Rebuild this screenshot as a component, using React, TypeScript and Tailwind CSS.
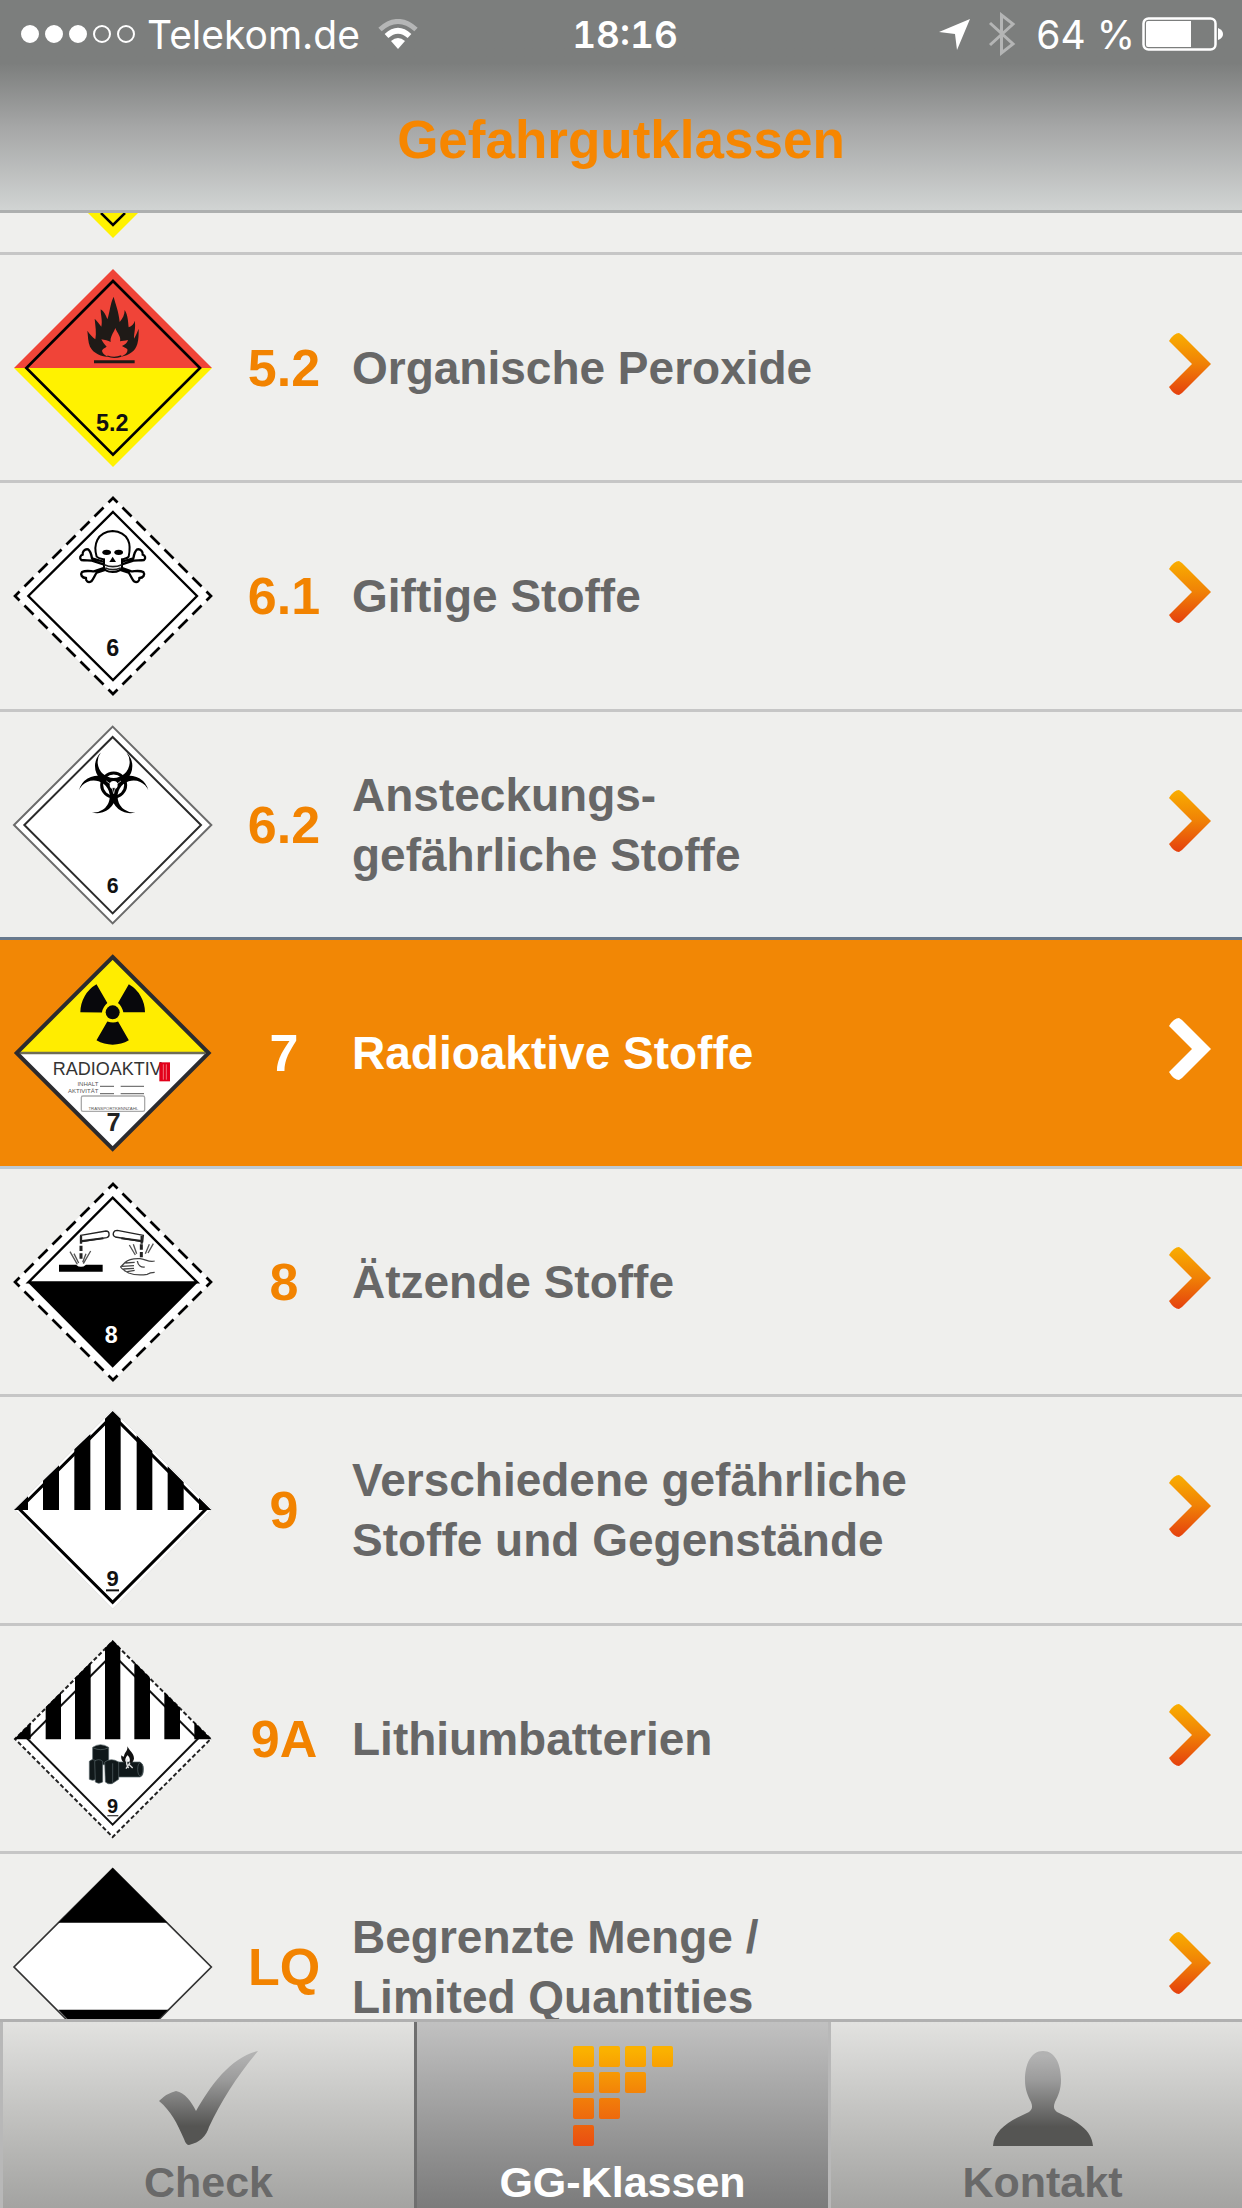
import React, { ReactNode } from 'react';
import clsx from 'clsx';

const DASHED = { strokeWidth: 8, pathLength: 28, strokeDasharray: '0.65 0.35', strokeDashoffset: 0.325 };

// every sign is a 594 unit wide diamond
const Sign = ({ top, children }: { top: number; children: ReactNode }) => (
    <svg viewBox={`42 ${top} 594 594`} className="w-[198px] h-[198px] shrink-0 overflow-visible" aria-hidden="true">
        {children}
    </svg>
);

const SignText = ({ x, y, size = 70, fill = '#111', children }: { x: number; y: number; size?: number; fill?: string; children: ReactNode }) => (
    <text x={x} y={y} fontSize={size} fill={fill} textAnchor="middle" fontWeight="bold">
        {children}
    </text>
);

const PeroxideSign = () => (
    <Sign top={205}>
        <path d="M42 502 339 205 636 502Z" fill="#f04438" />
        <path d="M42 502 339 799 636 502Z" fill="#fff200" />
        <path d="M339 241 600 502 339 762 79 502Z" fill="none" stroke="#000" strokeWidth="8" />
        <path
            fill="#1f1a17"
            d="M262 390C270 402 278 410 286 416C290 396 286 376 284 354C292 362 298 370 304 378C308 360 302 344 302 326C312 332 318 344 322 356C330 334 330 310 341 288C346 310 356 330 359 364C368 354 374 342 374 328C384 344 384 362 386 380C396 376 402 370 404 360C408 380 402 396 402 414C408 404 412 394 416 384C416 402 416 416 412 430C406 452 386 464 364 468C376 462 384 456 382 446C378 440 370 440 366 436C376 432 382 426 384 418C374 420 366 420 360 422C364 408 352 398 346 382C340 398 330 408 332 424C324 420 314 418 304 416C308 424 314 432 320 438C314 442 308 444 306 450C308 460 318 466 328 469C304 468 280 458 270 438C264 424 264 406 262 390Z"
        />
        <path d="M322 466Q342 474 364 466" fill="none" stroke="#1f1a17" strokeWidth="4" />
        <path d="M282 483H404" stroke="#1f1a17" strokeWidth="9" />
        <SignText x={337} y={690}>5.2</SignText>
    </Sign>
);

const Bone = ({ d }: { d: string }) => <path d={d} fill="#fff" stroke="#000" strokeWidth="7" strokeLinejoin="round" />;

const ToxicSign = () => (
    <Sign top={51}>
        <path d="M339 51 636 348 339 645 42 348Z" fill="#fff" />
        <path d="M339 54 633 348 339 642 45 348Z" fill="none" stroke="#000" {...DASHED} />
        <path d="M339 96 591 348 339 600 85 348Z" fill="none" stroke="#000" strokeWidth="7" />
        <Bone d="M314 246 276 235C274 224 270 212 264 208C254 206 246 216 248 224C240 226 238 236 244 240C256 242 268 240 276 242L386 278C392 286 396 298 402 304C412 310 420 302 418 294C430 294 436 284 430 276C418 270 404 274 394 274L350 258Z" />
        <Bone d="M362 246 400 235C402 224 406 212 412 208C422 206 430 216 428 224C436 226 438 236 432 240C420 242 408 240 400 242L290 278C284 286 280 298 274 304C264 310 256 302 258 294C246 294 240 284 246 276C258 270 272 274 282 274L328 258Z" />
        <path
            d="M290 230C284 210 286 192 292 180C300 164 318 154 338 153C358 154 376 164 384 180C390 192 390 210 386 230C382 236 374 236 366 238L366 262Q362 275 338 276Q314 275 312 262L312 238C304 236 296 236 290 230Z"
            fill="#fff"
            stroke="#000"
            strokeWidth="6"
        />
        <ellipse cx="320" cy="217" rx="13" ry="8" />
        <ellipse cx="356" cy="217" rx="13" ry="8" />
        <path d="M338 230 348 246H328Z" />
        <path d="M313 254Q338 266 366 254M316 264Q338 274 362 264" fill="none" stroke="#222" strokeWidth="5" />
        <SignText x={338} y={527}>6</SignText>
    </Sign>
);

const CRESCENT = 'M-38.5-97.7A56 56 0 1 0 38.5-97.7A48 48 0 1 1-38.5-97.7Z';

const InfectiousSign = () => (
    <Sign top={45}>
        <path d="M338 47 634 342 338 637 42 342Z" fill="#fff" stroke="#6b6b6b" strokeWidth="6" />
        <path d="M338 78 603 342 338 607 73 342Z" fill="none" stroke="#2a2a2a" strokeWidth="6" />
        <g transform="translate(341 222)">
            <path d={CRESCENT} />
            <path d={CRESCENT} transform="rotate(120)" />
            <path d={CRESCENT} transform="rotate(240)" />
            <circle r="36" fill="none" stroke="#000" strokeWidth="9" />
            <circle r="12" fill="#fff" />
            <path d="M-5 8 0 26 5 8ZM-8-2-22-12M8-2 22-12" stroke="#fff" strokeWidth="2" />
        </g>
        <SignText x={338} y={545} size={64}>6</SignText>
    </Sign>
);

const BLADE = 'M32 0H97A97 97 0 0 0 48.5-84L16-28Q28-18 32 0Z';

const RadioactiveSign = () => (
    <Sign top={71}>
        <path d="M338 78 628 368 338 658 48 368Z" fill="#fff" />
        <path d="M338 78 628 368H48Z" fill="#ffed00" />
        <path d="M60 368H616" stroke="#6f6d55" strokeWidth="7" />
        <path d="M338 80 626 368 338 656 50 368Z" fill="none" stroke="#2b2b2f" strokeWidth="12" />
        <g transform="translate(338 246)" fill="#08080c">
            <path d={BLADE} />
            <path d={BLADE} transform="rotate(120)" />
            <path d={BLADE} transform="rotate(240)" />
            <circle r="21" />
        </g>
        <g fontWeight="normal" fill="#555">
            <text x="158" y="435" fontSize="54" fill="#333">RADIOAKTIV</text>
            <text x="295" y="466" fontSize="18" textAnchor="end">INHALT</text>
            <text x="295" y="488" fontSize="18" textAnchor="end">AKTIVITÄT</text>
            <text x="340" y="539" fontSize="13" textAnchor="middle">TRANSPORTKENNZAHL</text>
        </g>
        <path d="M478 396H510V453H478Z" fill="#e2001a" />
        <path d="M490 402V448M499 402V448" stroke="#f2707c" strokeWidth="3" />
        <path d="M300 468H342M362 468H432M300 490H342M362 490H432" stroke="#777" strokeWidth="4" />
        <rect x="244" y="497" width="190" height="46" rx="5" fill="none" stroke="#aaa" strokeWidth="4" />
        <SignText x={341} y={603} size={76} fill="#222">7</SignText>
    </Sign>
);

const CorrosiveSign = () => (
    <Sign top={66}>
        <path d="M339 66 636 363 339 660 42 363Z" fill="#fff" />
        <path d="M339 69 633 363 339 657 45 363Z" fill="none" stroke="#000" {...DASHED} />
        <path d="M83 364H594L338 620Z" />
        <path d="M338 110 592 364H85Z" fill="none" stroke="#000" strokeWidth="7" />
        <g fill="none" stroke="#222" strokeWidth="4">
            <path d="M242 223 318 210C330 210 330 228 320 230L244 242ZM430 223 352 208C338 208 336 224 346 228L428 242Z" />
            <path d="M246 240 310 232M426 240 364 232" strokeWidth="6" />
            <path d="M243 225V248M425 225V248" strokeWidth="7" />
            <path d="M243 254V296M424 250V290" strokeWidth="9" strokeDasharray="16 7" />
            <path d="M210 272 232 310M222 278 236 306M272 270 250 308M258 278 248 304M388 252 406 282M400 250 410 278M448 250 436 278M460 248 444 276" stroke="#555" />
            <path d="M464 300C448 306 436 294 420 293C400 292 384 296 376 304L362 318C366 326 376 330 386 336C402 342 428 342 442 340C450 334 456 334 464 334M376 306 404 304M366 316 402 314M370 324 402 322M382 332 404 328M412 300C414 314 424 320 434 318" stroke="#444" />
        </g>
        <path d="M177 311H228Q243 324 258 311H308V332H177Z" />
        <SignText x={334} y={546} fill="#fff">8</SignText>
    </Sign>
);

const MiscSign = () => (
    <Sign top={60}>
        <path d="M338 56 636 354 338 654 42 354Z" fill="#fff" stroke="#ddd" strokeWidth="2" />
        <path d="M338 74 618 354 338 634 58 354Z" fill="none" stroke="#000" strokeWidth="9" />
        <path d="M315 83 338 60 362 83V357H315ZM223 175 271 129V357H223ZM129 269 177 223V357H129ZM410 133 457 180V357H410ZM503 226 551 274V357H503ZM42 357 84 316V357ZM597 320 634 357H597Z" />
        <SignText x={338} y={586} size={66}>9</SignText>
        <path d="M318 598H357" stroke="#111" strokeWidth="6" />
    </Sign>
);

const BatterySign = () => (
    <Sign top={56}>
        <path d="M338 56 636 353 338 651 42 353Z" fill="#fff" />
        <path d="M338 60 632 353 338 647 45 353Z" fill="none" stroke="#222" strokeWidth="6" strokeDasharray="13 7" />
        <path d="M338 98 593 353 338 610 83 353Z" fill="none" stroke="#111" strokeWidth="6" />
        <path d="M315 80 338 57 361 80V354H315ZM225 170 272 123V354H225ZM137 258 183 212V354H137ZM403 122 450 169V354H403ZM493 212 540 259V354H493ZM42 354 92 304V354ZM583 302 635 354H583Z" />
        <g fill="#10181a" stroke="#59666a" strokeWidth="2">
            <path d="M278 378Q301 362 326 378V430H278Z" />
            <path d="M268 420Q276 410 288 418V474Q278 480 268 474ZM350 422H420Q432 430 430 446Q430 464 420 467H350Z" />
            <path d="M284 420Q296 410 308 420V482Q296 490 286 482Z" />
            <path d="M314 422Q334 408 356 422V474L336 487Q324 490 316 482Z" />
            <path d="M338 426V484M280 380Q302 390 324 380" fill="none" />
            <ellipse cx="421" cy="444" rx="8" ry="20" />
        </g>
        <path d="M382 375C388 388 402 396 402 412C400 422 394 426 388 424C392 414 388 406 382 402C376 410 374 416 378 424C366 424 362 412 364 402C368 406 370 406 372 406C372 394 384 390 382 375Z" fill="#111" />
        <path d="M382 412Q376 426 386 440M390 424 378 442M388 430 398 440" fill="none" stroke="#ddd" strokeWidth="4" />
        <SignText x={338} y={575} size={60}>9</SignText>
        <path d="M322 583H355" stroke="#444" strokeWidth="4" />
    </Sign>
);

const LimitedSign = () => (
    <Sign top={82}>
        <path d="M338 84 634 379 338 675 42 379Z" fill="#fff" stroke="#333" strokeWidth="5" />
        <path d="M338 82 502 246H175ZM175 507H504L338 675Z" />
    </Sign>
);

const Chevron = ({ active }: { active?: boolean }) => (
    <svg viewBox="0 0 42 62" className="w-[42px] h-[62px] mb-2 mr-[31px] shrink-0" aria-hidden="true">
        <path d="M0 8Q5 0 10 0L13 2 42 31 13 60 10 62Q5 62 0 54L23 31Z" fill={active ? '#fff' : 'url(#chevron)'} />
    </svg>
);

const ROWS = [
    { code: '5.2', lines: ['Organische Peroxide'], sign: <PeroxideSign /> },
    { code: '6.1', lines: ['Giftige Stoffe'], sign: <ToxicSign /> },
    { code: '6.2', lines: ['Ansteckungs-', 'gefährliche Stoffe'], sign: <InfectiousSign />, line: 'border-[#68798d]' },
    { code: '7', lines: ['Radioaktive Stoffe'], sign: <RadioactiveSign />, line: 'border-[#bdcad5]', active: true },
    { code: '8', lines: ['Ätzende Stoffe'], sign: <CorrosiveSign /> },
    { code: '9', lines: ['Verschiedene gefährliche', 'Stoffe und Gegenstände'], sign: <MiscSign /> },
    { code: '9A', lines: ['Lithiumbatterien'], sign: <BatterySign /> },
    { code: 'LQ', lines: ['Begrenzte Menge /', 'Limited Quantities'], sign: <LimitedSign /> },
];

const StatusBar = () => (
    <div className="grid grid-cols-[1fr_auto_1fr] items-center h-[68px] text-white text-[39px] leading-none font-['Inter',sans-serif]">
        <div className="flex items-center pl-[21px]">
            <div className="flex gap-[6px] mr-3">
                {[1, 1, 1, 0, 0].map((on, i) => (
                    <span key={i} className={clsx('size-[18px] rounded-full border-2 border-white', on && 'bg-white')} />
                ))}
            </div>
            <span>Telekom.de</span>
            <svg viewBox="0 0 40 30" className="w-10 h-[30px] ml-[18px]" fill="none" aria-hidden="true">
                <path d="M2 10.500Q20-5.500 38 10.500" stroke="#b5b6b6" strokeWidth="5" />
                <path d="M8.500 17Q20 6.500 31.500 17" stroke="#fff" strokeWidth="5.500" />
                <path d="M13 22Q20 16 27 22L20 30Z" fill="#fff" />
            </svg>
        </div>
        <span className="pl-2 text-[37px] font-semibold tabular-nums">18:16</span>
        <div className="flex items-center justify-end pr-[18px]">
            <svg viewBox="0 0 31 31" className="size-[31px] mr-[18px]" aria-hidden="true">
                <path d="M31 0 18 31 16 15 0 13Z" fill="#fff" />
            </svg>
            <svg viewBox="0 0 28 44" className="w-7 h-11 mr-5" fill="none" stroke="#b4b5b5" strokeWidth="3" aria-hidden="true">
                <path d="M2 11 25 32 13.500 41V3L25 12 2 33" />
            </svg>
            <span>64 %</span>
            <svg viewBox="0 0 82 34" className="w-[82px] h-[34px] ml-[7px]" aria-hidden="true">
                <rect x="1.500" y="1.500" width="72" height="31" rx="5" fill="none" stroke="#fff" strokeWidth="2.500" />
                <path d="M6 4H49V30H6Q4 30 4 28V6Q4 4 6 4Z" fill="#fff" />
                <path d="M76 11Q81 13 81 17T76 23Z" fill="#fff" />
            </svg>
        </div>
    </div>
);

const CheckIcon = () => (
    <svg viewBox="0 0 100 94" className="w-[100px] h-[100px] pt-1" aria-hidden="true">
        <path d="M0 50Q8 42 17 40C26 42 32 50 37 60C52 34 72 6 99 0C78 25 62 50 50 76Q46 90 30 94Q27 94 25 88C18 72 12 60 0 50Z" fill="url(#grey)" />
    </svg>
);

const ClassesIcon = () => (
    <svg viewBox="0 0 100 100" className="size-[100px]" fill="url(#squares)" aria-hidden="true">
        <path d="M2 0H19Q21 0 21 2V19Q21 21 19 21H2Q0 21 0 19V2Q0 0 2 0ZM28 0H45Q47 0 47 2V19Q47 21 45 21H28Q26 21 26 19V2Q26 0 28 0ZM54 0H71Q73 0 73 2V19Q73 21 71 21H54Q52 21 52 19V2Q52 0 54 0ZM81 0H98Q100 0 100 2V19Q100 21 98 21H81Q79 21 79 19V2Q79 0 81 0ZM2 26H19Q21 26 21 28V45Q21 47 19 47H2Q0 47 0 45V28Q0 26 2 26ZM28 26H45Q47 26 47 28V45Q47 47 45 47H28Q26 47 26 45V28Q26 26 28 26ZM54 26H71Q73 26 73 28V45Q73 47 71 47H54Q52 47 52 45V28Q52 26 54 26ZM2 52H19Q21 52 21 54V71Q21 73 19 73H2Q0 73 0 71V54Q0 52 2 52ZM28 52H45Q47 52 47 54V71Q47 73 45 73H28Q26 73 26 71V54Q26 52 28 52ZM2 79H19Q21 79 21 81V98Q21 100 19 100H2Q0 100 0 98V81Q0 79 2 79Z" />
    </svg>
);

const ContactIcon = () => (
    <svg viewBox="0 0 100 100" className="size-[100px]" aria-hidden="true">
        <path d="M50 5C62 5 68 18 68 34C68 44 65 50 62 56C60 61 61 64 64 66C84 75 99 84 100 100H0C1 84 16 75 36 66C39 64 40 61 38 56C35 50 32 44 32 34C32 18 38 5 50 5Z" fill="url(#grey)" />
    </svg>
);

const Tab = ({ label, icon, active, className }: { label: string; icon: ReactNode; active?: boolean; className?: string }) => (
    <button
        type="button"
        className={clsx(
            'flex flex-col items-center pt-6 border-l-[3px] bg-linear-to-b text-[43px] leading-[48px] font-bold',
            active
                ? 'border-[#6f6f6f] from-[#c1c1c1] to-[#7b7b7b] text-white'
                : 'border-[#b8b8b8] from-[#e2e2e0] to-[#a3a3a1] text-[#696969]',
            className
        )}
    >
        {icon}
        <span className="mt-3">{label}</span>
    </button>
);

export default function App() {
    return (
        <div className="h-screen flex flex-col overflow-hidden bg-[#efefed] font-['Liberation_Sans',Arial,sans-serif]">
            <svg className="absolute size-0" aria-hidden="true">
                <defs>
                    <linearGradient id="chevron" x1="0" y1="0" x2="0" y2="1">
                        <stop offset="0" stopColor="#f9ae00" />
                        <stop offset="0.5" stopColor="#f08106" />
                        <stop offset="1" stopColor="#e5400e" />
                    </linearGradient>
                    <linearGradient id="squares" x1="0" y1="0" x2="0" y2="1">
                        <stop offset="0.050" stopColor="#fbb100" />
                        <stop offset="0.450" stopColor="#f38508" />
                        <stop offset="1" stopColor="#e94e12" />
                    </linearGradient>
                    <linearGradient id="grey" x1="0" y1="0" x2="0" y2="1">
                        <stop offset="0.050" stopColor="#b2b2b2" />
                        <stop offset="0.300" stopColor="#9c9c9c" />
                        <stop offset="0.800" stopColor="#555553" />
                    </linearGradient>
                </defs>
            </svg>

            <header className="shrink-0 border-b-[3px] border-[#adafaf] bg-linear-to-b from-[#7c7e7d] from-30% via-[#a5a6a6] via-60% to-[#d1d4d3]">
                <StatusBar />
                <h1 className="h-[142px] flex items-center justify-center text-[53px] leading-none font-bold text-[#f68600]">
                    Gefahrgutklassen
                </h1>
            </header>

            <main className="flex-1 min-h-0 overflow-hidden">
                <div className="h-[42px] flex items-start pl-[88px] border-b-[3px] border-[#c6c6c6]">
                    <svg viewBox="0 0 50 25" className="w-[50px] h-[25px]" aria-hidden="true">
                        <path d="M0 0H50L25 25Z" fill="#fff200" />
                        <path d="M13 0 25 12 37 0" fill="none" stroke="#000" strokeWidth="2.500" />
                    </svg>
                </div>
                <ul>
                    {ROWS.map(({ code, lines, sign, line, active }) => (
                        <li key={code} className="flex min-h-[229px] odd:min-h-[228px]">
                            <a
                                href={`#${code}`}
                                className={clsx(
                                    'flex-1 flex items-center pl-[14px] border-b-[3px] font-bold',
                                    line ?? 'border-[#c6c6c6]',
                                    active ? 'bg-[#f28705] text-white' : 'text-[#676767]'
                                )}
                            >
                                {sign}
                                <span className={clsx('w-[136px] ml-1 shrink-0 text-center text-[52px]', !active && 'text-[#f28300]')}>{code}</span>
                                <span className="flex-1 text-[46px] leading-[60px]">
                                    {lines.map((text) => (
                                        <span key={text} className="block">{text}</span>
                                    ))}
                                </span>
                                <Chevron active={active} />
                            </a>
                        </li>
                    ))}
                </ul>
            </main>

            <nav className="h-[189px] shrink-0 grid grid-cols-3 border-t-[3px] border-[#b0b0b0]">
                <Tab label="Check" icon={<CheckIcon />} />
                <Tab label="GG-Klassen" icon={<ClassesIcon />} active />
                <Tab label="Kontakt" icon={<ContactIcon />} className="pl-3" />
            </nav>
        </div>
    );
}
